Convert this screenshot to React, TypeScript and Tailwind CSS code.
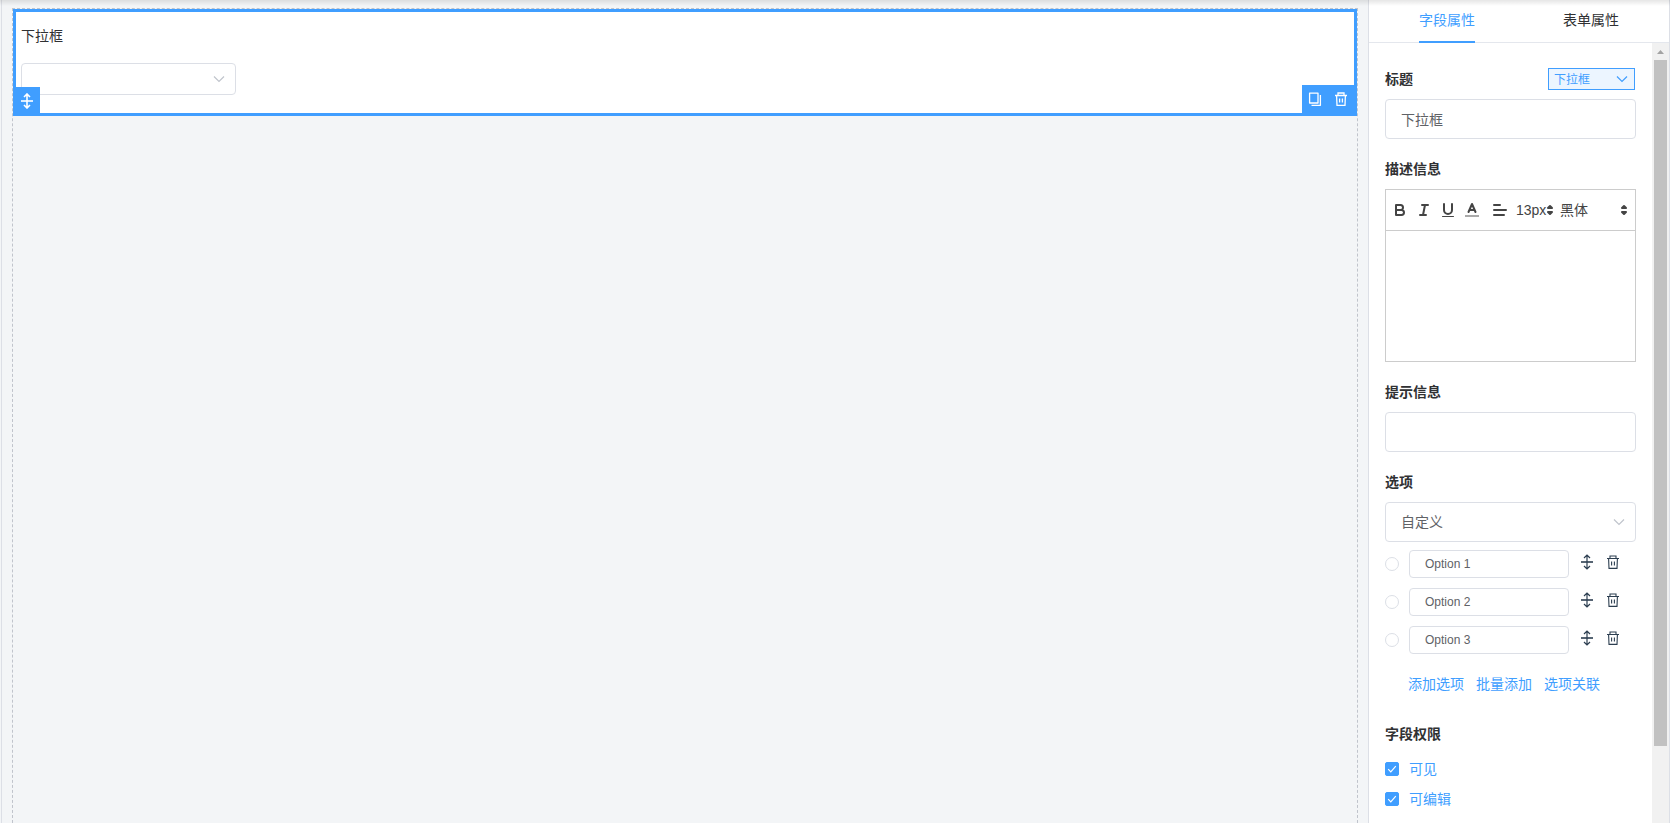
import { useState } from 'react';
import type { ReactNode, SVGProps } from 'react';

type IconProps = SVGProps<SVGSVGElement>;

function MoveIcon(props: IconProps) {
  return (
    <svg viewBox="0 0 16 16" fill="none" stroke="currentColor" strokeWidth="1.2" {...props}>
      <path d="M2 8h12" strokeWidth="1.6" />
      <path d="M8 1v14M5 4l3-3 3 3M5 12l3 3 3-3" />
    </svg>
  );
}

function TrashIcon(props: IconProps) {
  return (
    <svg viewBox="0 0 16 16" fill="none" stroke="currentColor" strokeWidth="1.1" {...props}>
      <path d="M2 4.5h12M5 4.200V2h6v2.200M3.600 4.500l.4 9.900h8l.4-9.900M6.600 7.500v4M9.400 7.500v4" />
    </svg>
  );
}

function CopyIcon(props: IconProps) {
  return (
    <svg viewBox="0 0 16 16" fill="none" stroke="currentColor" strokeWidth="1.3" strokeLinejoin="round" {...props}>
      <path d="M2.600 2.100h8.400v9.900H2.600zM4.500 14.300h8.900V4" />
    </svg>
  );
}

function Chevron({ className }: { className?: string }) {
  return (
    <svg
      viewBox="0 0 14 14"
      fill="none"
      stroke="currentColor"
      strokeWidth="1.2"
      className={`pointer-events-none absolute top-1/2 size-[14px] -translate-y-1/2 ${className}`}
    >
      <path d="M2 4.500l5 5 5-5" />
    </svg>
  );
}

function PickerArrows({ className }: { className?: string }) {
  return (
    <svg
      viewBox="0 0 18 18"
      fill="#444"
      stroke="#444"
      strokeWidth="2"
      strokeLinejoin="round"
      strokeLinecap="round"
      className={`pointer-events-none absolute top-1/2 size-[18px] -translate-y-1/2 ${className}`}
    >
      <path d="M7 11l2 2 2-2zM7 7l2-2 2 2z" />
    </svg>
  );
}

function ToolButton({ label, wide, children }: { label: string; wide?: boolean; children: ReactNode }) {
  return (
    <button type="button" aria-label={label} className={`flex h-6 items-center justify-center ${wide ? 'w-8' : 'w-6'}`}>
      <svg viewBox="0 0 18 18" fill="none" stroke="#444" strokeWidth="2" strokeLinecap="round" strokeLinejoin="round" className="size-[18px]">
        {children}
      </svg>
    </button>
  );
}

function EditorToolbar() {
  return (
    <div className="flex h-[41px] items-center border-b border-[#ccc] pl-[2px]">
      <ToolButton label="加粗">
        <path d="M5 4h4.500a2.500 2.500 0 0 1 0 5H5zM5 9h5.500a2.500 2.500 0 0 1 0 5H5z" />
      </ToolButton>
      <ToolButton label="斜体">
        <path d="M7 4h6M5 14h6M8 14l2-10" />
      </ToolButton>
      <ToolButton label="下划线">
        <path d="M5 3v6a4 4 0 0 0 8 0V3" />
        <path d="M3.500 15.500h11" strokeWidth="1" />
      </ToolButton>
      <ToolButton label="文字颜色">
        <path d="M3 15h12" stroke="#aaa" strokeLinecap="square" />
        <path d="M5.500 11L9 3l3.500 8M11.600 9H6.400" />
      </ToolButton>
      <ToolButton label="对齐" wide>
        <path d="M3 9h12M3 14h10M3 4h6" />
      </ToolButton>
      <div className="relative w-11">
        <select aria-label="字号" className="w-full appearance-none text-sm text-[#444] outline-none">
          <option>13px</option>
        </select>
        <PickerArrows className="right-[1px]" />
      </div>
      <div className="relative flex-1">
        <select aria-label="字体" className="w-full appearance-none text-sm text-[#444] outline-none">
          <option>黑体</option>
        </select>
        <PickerArrows className="right-[2px]" />
      </div>
    </div>
  );
}

function CheckItem({ label }: { label: string }) {
  const [checked, setChecked] = useState(true);

  return (
    <label className="flex h-[30px] items-center gap-[10px] text-sm text-[#409eff]">
      <span className="relative flex">
        <input
          type="checkbox"
          checked={checked}
          onChange={(e) => setChecked(e.target.checked)}
          className="size-[14px] appearance-none rounded-[2px] border border-[#dcdfe6] bg-white checked:border-[#409eff] checked:bg-[#409eff]"
        />
        <svg viewBox="0 0 14 14" fill="none" stroke="#fff" strokeWidth="1.2" className="pointer-events-none absolute inset-0">
          <path d="M3.200 7.200l2.600 2.600 5-5.600" />
        </svg>
      </span>
      {label}
    </label>
  );
}

const labelClass = 'flex h-10 items-center text-sm font-bold text-[#303133]';
const inputClass = 'h-10 w-full rounded border border-[#dcdfe6] bg-white px-[15px] text-sm text-[#606266] outline-none';

export default function App() {
  const [title, setTitle] = useState('下拉框');
  const [options, setOptions] = useState(['Option 1', 'Option 2', 'Option 3']);

  const handleOptionChange = (index: number, value: string) => {
    setOptions(options.map((item, i) => (i === index ? value : item)));
  };

  const handleRemove = (index: number) => {
    setOptions(options.filter((_, i) => i !== index));
  };

  return (
    <div className="relative flex h-screen overflow-hidden bg-[#f3f5f7] font-['Liberation_Sans','Noto_Sans_CJK_SC',sans-serif] text-sm">
      {/* Shadow cast by the header above */}
      <div className="pointer-events-none absolute inset-x-0 top-0 z-10 h-[6px] bg-linear-to-b from-black/10 to-transparent" />

      {/* Canvas */}
      <main className="ml-px flex min-w-0 flex-1 flex-col border-l border-[#dcdfe6] pt-2 pr-[10px] pl-[10px]">
        <div className="flex-1 border border-b-0 border-dashed border-[#c0c4cc]">
          <section className="relative border-3 border-[#409eff] bg-white px-[5px] pt-3 pb-[18px]">
            <label htmlFor="field" className="mb-[15px] flex h-6 items-center text-[#303133]">
              {title}
            </label>
            <div className="relative w-[215px]">
              <select id="field" className="block h-8 w-full appearance-none rounded border border-[#dcdfe6] bg-white px-[15px] outline-none" />
              <Chevron className="right-[10px] text-[#c0c4cc]" />
            </div>
            <button type="button" aria-label="拖动" className="absolute -bottom-[3px] -left-[3px] flex h-[29px] w-[27px] items-center justify-center bg-[#409eff] pb-[2px] text-white">
              <MoveIcon className="size-4 stroke-[1.6]" />
            </button>
            <div className="absolute -right-[3px] -bottom-[3px] flex h-[31px] items-center gap-[10px] bg-[#409eff] pr-2 pb-[3px] pl-[5px] text-white">
              <button type="button" aria-label="复制">
                <CopyIcon className="size-4" />
              </button>
              <button type="button" aria-label="删除">
                <TrashIcon className="size-4 stroke-[1.3]" />
              </button>
            </div>
          </section>
        </div>
      </main>

      {/* Property panel */}
      <aside className="flex w-[302px] shrink-0 flex-col border-x border-[#dcdfe6] bg-white">
        <nav className="flex h-[43px] shrink-0 justify-center gap-[88px] border-b border-[#e4e7ed]">
          <button type="button" className="-mb-px h-[43px] border-b-2 border-[#409eff] pb-[2px] text-[#409eff]">
            字段属性
          </button>
          <button type="button" className="-mb-px h-[43px] border-b-2 border-transparent pb-[2px] text-[#303133]">
            表单属性
          </button>
        </nav>

        <div className="flex min-h-0 flex-1">
          <form className="min-w-0 flex-1 overflow-hidden p-4">
            <div className="mb-[10px]">
              <div className="flex items-center justify-between">
                <label htmlFor="title" className={labelClass}>
                  标题
                </label>
                <div className="relative mr-px w-[87px]">
                  <select
                    aria-label="字段类型"
                    className="block h-[22px] w-full appearance-none border border-[#409eff] bg-[#ecf5ff] px-[5px] pt-px text-xs text-[#409eff] outline-none"
                  >
                    <option>下拉框</option>
                  </select>
                  <Chevron className="right-[6px] text-[#409eff]" />
                </div>
              </div>
              <input id="title" value={title} onChange={(e) => setTitle(e.target.value)} className={inputClass} />
            </div>

            <div className="mb-[10px]">
              <label htmlFor="desc" className={labelClass}>
                描述信息
              </label>
              <div className="border border-[#ccc]">
                <EditorToolbar />
                <textarea id="desc" className="block h-[130px] w-full resize-none px-[15px] py-3 outline-none" />
              </div>
            </div>

            <div className="mb-[10px]">
              <label htmlFor="hint" className={labelClass}>
                提示信息
              </label>
              <input id="hint" className={inputClass} />
            </div>

            <div className="mb-[10px]">
              <label htmlFor="source" className={labelClass}>
                选项
              </label>
              <div className="relative mb-2">
                <select id="source" className={`${inputClass} block appearance-none`}>
                  <option>自定义</option>
                </select>
                <Chevron className="right-[10px] text-[#c0c4cc]" />
              </div>
              <div className="flex flex-col gap-[10px]">
                {options.map((option, index) => (
                  <div key={index} className="flex items-center gap-[10px]">
                    <input
                      type="radio"
                      name="default"
                      aria-label={option}
                      className="size-[14px] shrink-0 appearance-none rounded-full border border-[#dcdfe6] bg-white checked:border-4 checked:border-[#409eff]"
                    />
                    <input
                      value={option}
                      aria-label={`选项 ${index + 1}`}
                      onChange={(e) => handleOptionChange(index, e.target.value)}
                      className="h-7 w-40 rounded border border-[#dcdfe6] px-[15px] text-xs text-[#606266] outline-none"
                    />
                    <button type="button" aria-label="排序" className="pb-1 text-[#2c3e50]">
                      <MoveIcon className="size-4" />
                    </button>
                    <button type="button" aria-label="删除" onClick={() => handleRemove(index)} className="pb-1 text-[#2c3e50]">
                      <TrashIcon className="size-4" />
                    </button>
                  </div>
                ))}
              </div>
              <div className="mt-[10px] flex h-10 items-center gap-3 pl-[23px] text-[#409eff]">
                <button type="button" onClick={() => setOptions([...options, `Option ${options.length + 1}`])}>
                  添加选项
                </button>
                <button type="button">批量添加</button>
                <button type="button">选项关联</button>
              </div>
            </div>

            <fieldset>
              <legend className={labelClass}>字段权限</legend>
              <CheckItem label="可见" />
              <CheckItem label="可编辑" />
            </fieldset>
          </form>

          {/* Scrollbar */}
          <div className="flex w-[17px] flex-col items-center bg-[#f1f1f1]">
            <svg viewBox="0 0 17 17" fill="#a3a3a3" className="size-[17px] shrink-0">
              <path d="M5 11h7L8.500 7z" />
            </svg>
            <div className="h-[88%] w-[13px] bg-[#c1c1c1]" />
          </div>
        </div>
      </aside>
    </div>
  );
}
